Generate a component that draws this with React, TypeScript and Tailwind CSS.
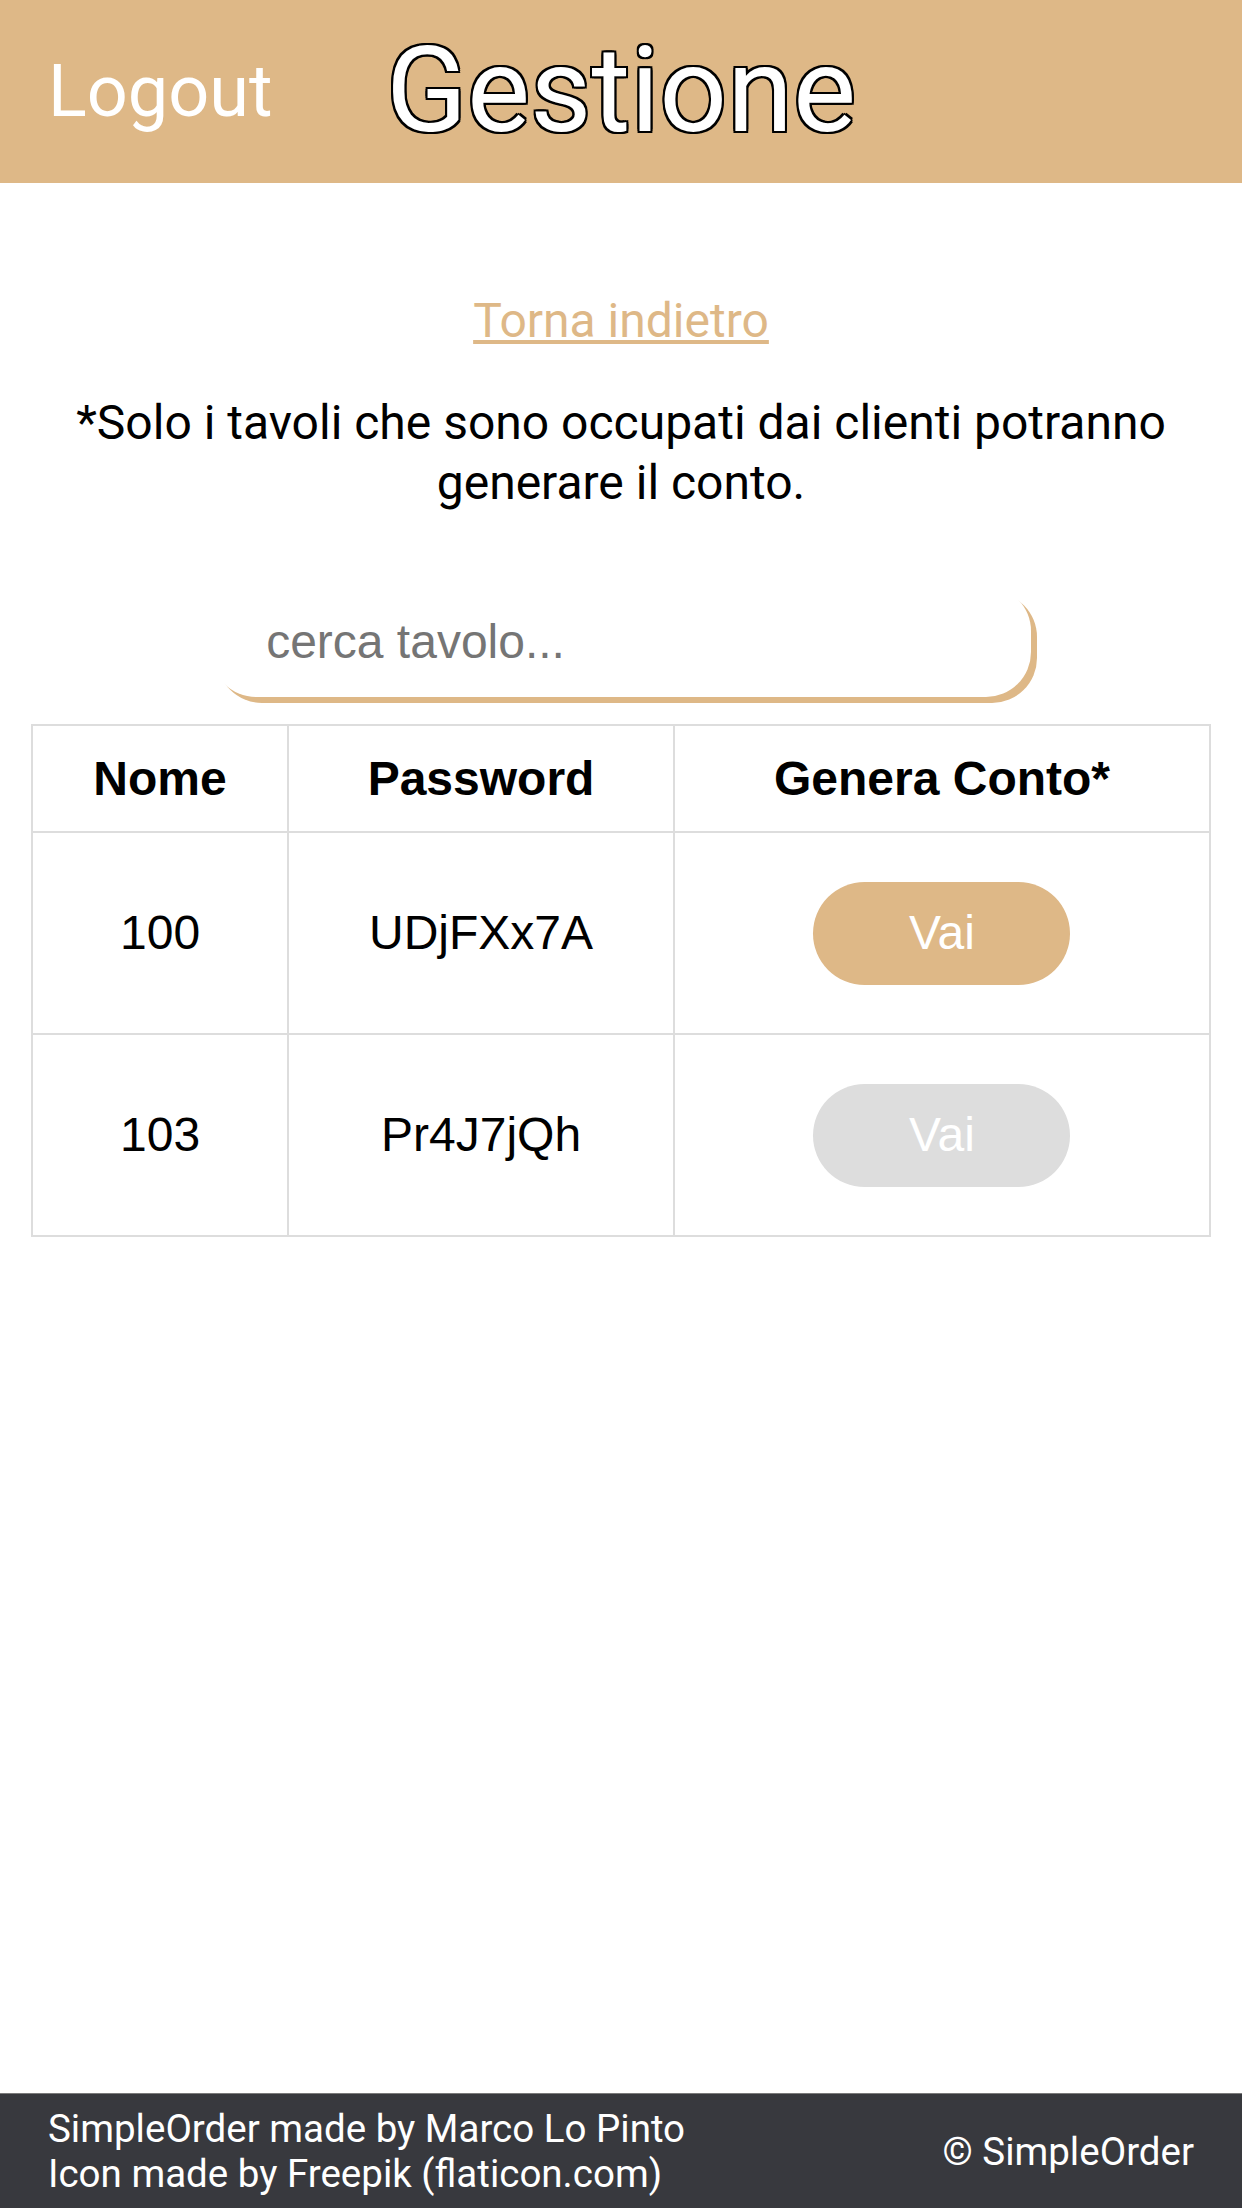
import React from "react";

const rows = [
  { nome: "100", password: "UDjFXx7A", attivo: true },
  { nome: "103", password: "Pr4J7jQh", attivo: false },
];

const App = () => {
  return (
    <div className="min-h-screen flex flex-col bg-white font-['Roboto',sans-serif]">
      {/* header */}
      <div className="h-[183px] bg-[#DEB887] grid grid-cols-[1fr_auto_1fr] items-center">
        <div className="pl-[48px] text-[72px] text-white leading-normal">Logout</div>
        <h1 className="text-[119px] text-white leading-normal [text-shadow:2px_0_#000,-2px_0_#000,0_2px_#000,0_-2px_#000,2px_2px_#000,-2px_-2px_#000,2px_-2px_#000,-2px_2px_#000]">
          Gestione
        </h1>
        <div />
      </div>

      <div className="flex flex-col items-center text-center">
        <a className="mt-[102px] text-[48px] leading-normal text-[#DEB887] underline cursor-pointer">
          Torna indietro
        </a>
        <p className="mt-[36px] px-[40px] text-[48px] leading-[60px] text-black">
          *Solo i tavoli che sono occupati dai clienti potranno generare il conto.
        </p>

        <input
          type="text"
          placeholder="cerca tavolo..."
          className="mt-[73px] w-[66%] h-[111px] rounded-[45px] bg-white pl-[55px] text-[48px] font-['Liberation_Sans',Arial,sans-serif] placeholder:text-[#757575] outline-none shadow-[6px_6px_0_0_#DEB887]"
        />

        <table className="mt-[27px] w-[95%] table-fixed border-collapse font-['Liberation_Sans',Arial,sans-serif] text-[48px] text-black">
          <colgroup>
            <col className="w-[256px]" />
            <col className="w-[386px]" />
            <col />
          </colgroup>
          <thead>
            <tr>
              <th className="h-[107px] border-2 border-[#dddddd] font-bold">Nome</th>
              <th className="h-[107px] border-2 border-[#dddddd] font-bold">Password</th>
              <th className="h-[107px] border-2 border-[#dddddd] font-bold">Genera Conto*</th>
            </tr>
          </thead>
          <tbody>
            {rows.map((r) => (
              <tr key={r.nome}>
                <td className="h-[202px] border-2 border-[#dddddd]">{r.nome}</td>
                <td className="h-[202px] border-2 border-[#dddddd]">{r.password}</td>
                <td className="h-[202px] border-2 border-[#dddddd]">
                  <button
                    className={
                      r.attivo
                        ? "w-[257px] h-[103px] rounded-full bg-[#DEB887] text-white text-[48px]"
                        : "w-[257px] h-[103px] rounded-full bg-[#dddddd] text-white text-[48px]"
                    }
                  >
                    Vai
                  </button>
                </td>
              </tr>
            ))}
          </tbody>
        </table>
      </div>

      {/* footer */}
      <div className="mt-auto bg-[#38393e] border-t border-[#7a7a7a] flex items-center justify-between px-[48px] py-[12px] text-[38.5px] leading-[45px] text-white">
        <div>
          <div>SimpleOrder made by Marco Lo Pinto</div>
          <div>Icon made by Freepik (flaticon.com)</div>
        </div>
        <div>© SimpleOrder</div>
      </div>
    </div>
  );
};

export default App;
